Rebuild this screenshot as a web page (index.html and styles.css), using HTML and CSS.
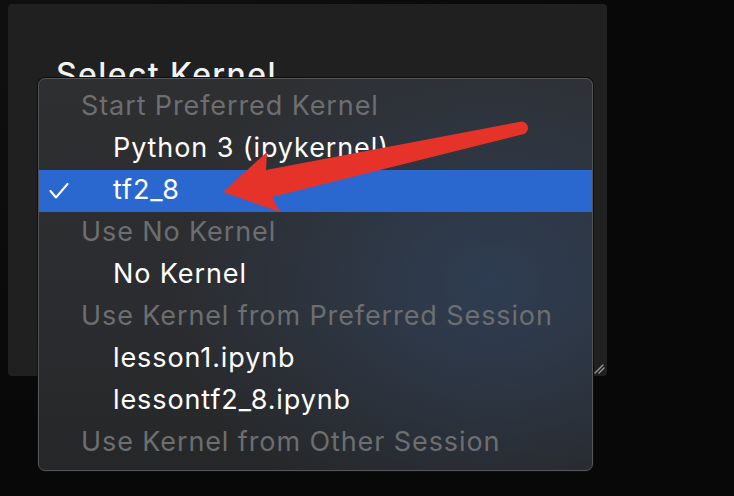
FILE: index.html
```html
<!DOCTYPE html>
<html>
<head>
<meta charset="utf-8">
<link rel="stylesheet" href="styles.css">
</head>
<body>
<div class="stage">
  <div class="dialog">
    <h1 class="title">Select Kernel</h1>
    <svg class="grip" width="12" height="12" viewBox="0 0 12 12">
      <path d="M1 10 L9 2 M5 10 L10 5" stroke="#9a9a9a" stroke-width="1.3" stroke-linecap="round"/>
    </svg>
  </div>
  <div class="menu">
    <div class="row header">Start Preferred Kernel</div>
    <div class="row item">Python 3 (ipykernel)</div>
    <div class="row item selected"><svg class="check" width="20" height="16" viewBox="0 0 20 16"><path d="M1.5 8 L7 14.5 L18.5 1" fill="none" stroke="#fff" stroke-width="2" stroke-linecap="round" stroke-linejoin="round"/></svg>tf2_8</div>
    <div class="row header">Use No Kernel</div>
    <div class="row item">No Kernel</div>
    <div class="row header">Use Kernel from Preferred Session</div>
    <div class="row item">lesson1.ipynb</div>
    <div class="row item">lessontf2_8.ipynb</div>
    <div class="row header">Use Kernel from Other Session</div>
  </div>
  <svg class="arrow" width="734" height="496" viewBox="0 0 734 496">
    <path d="M223 192 L267 152 L266 170 L519 122 A6 6 0 0 1 524 134 L272 197 L280 212 Z" fill="#e63329"/>
  </svg>
</div>
</body>
</html>
```
FILE: styles.css
```css
html, body {
  margin: 0;
  padding: 0;
}
body {
  background: #080808;
  font-family: Inter, "Open Sans", sans-serif;
  width: 734px;
  height: 496px;
  overflow: hidden;
}
.stage {
  position: relative;
  width: 734px;
  height: 496px;
  background: radial-gradient(ellipse at 10% 5%, #101010 0%, #080808 60%);
}
.dialog {
  position: absolute;
  left: 8px;
  top: 4px;
  width: 599px;
  height: 372px;
  background: #202020;
  border-radius: 4px;
}
.title {
  margin: 0;
  position: absolute;
  left: 48px;
  top: 51px;
  font-size: 32px;
  font-weight: 500;
  letter-spacing: 1.4px;
  color: #f2f2f2;
  line-height: 40px;
  white-space: nowrap;
}
.grip {
  position: absolute;
  right: 1px;
  bottom: 1px;
}
.menu {
  position: absolute;
  left: 38px;
  top: 78px;
  width: 553px;
  padding: 7px 0 6px;
  border: 1px solid #545658;
  border-radius: 7px;
  background:
    radial-gradient(ellipse 320px 260px at 82% 52%, rgba(47, 62, 84, 0.95) 0%, rgba(47, 62, 84, 0) 100%),
    linear-gradient(180deg, #2e2f31 0%, #2b2c2f 60%, #262728 100%);
  box-shadow: 0 0 0 1px #0e0e0e;
  display: flex;
  flex-direction: column;
  overflow: hidden;
}
.row {
  height: 42px;
  display: flex;
  align-items: center;
  font-size: 27px;
  line-height: 1;
  padding-bottom: 3px;
  box-sizing: border-box;
  position: relative;
  letter-spacing: 0.9px;
}
.header {
  color: #6d6e70;
  padding-left: 42px;
}
.item {
  color: #ffffff;
  padding-left: 74px;
}
.selected {
  background: #2a68d0;
}
.check {
  position: absolute;
  left: 10px;
  top: 13px;
}
.arrow {
  position: absolute;
  left: 0;
  top: 0;
}
```
